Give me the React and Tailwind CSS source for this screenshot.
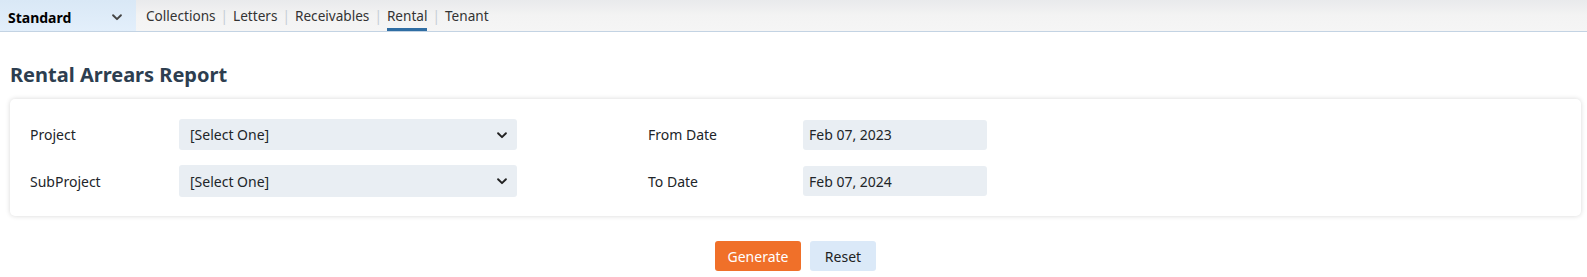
import React from "react";

const Chevron = ({ className = "" }) => (
  <svg viewBox="0 0 16 16" className={className} fill="none" stroke="currentColor" strokeWidth="2.2" strokeLinecap="round" strokeLinejoin="round">
    <path d="M3.5 6 L8 10.5 L12.5 6" />
  </svg>
);

export default function App() {
  const tabs = ["Collections", "Letters", "Receivables", "Rental", "Tenant"];
  return (
    <div className="w-[1587px] h-[277px] bg-white text-[14px] text-[#212529]" style={{ fontFamily: '"Noto Sans", "Open Sans", sans-serif' }}>
      <div className="h-[32px] flex items-stretch bg-gradient-to-b from-[#e9eaec] via-[#f3f3f3] to-[#f5f5f5] border-b border-[#c3d3e3]">
        <div className="w-[136px] flex items-center justify-between pl-[8px] pr-[12px] pt-[3px] bg-gradient-to-b from-[#d9e8f6] to-[#e3effb]">
          <span className="font-bold text-[14px] text-black">Standard</span>
          <Chevron className="w-[14px] h-[14px] text-[#444]" />
        </div>
        <div className="flex items-stretch pl-[10px]">
          {tabs.map((t, i) => (
            <div key={t} className="flex items-stretch">
              {i > 0 && <span className="self-center text-[#c5cdd6] px-[5px] pt-[2px] text-[13.6px]">|</span>}
              <span className={"flex items-center pt-[4px] text-[13.6px] text-[#333] border-b-[3px] " + (t === "Rental" ? "border-[#2f6da3]" : "border-transparent")}>
                {t}
              </span>
            </div>
          ))}
        </div>
      </div>

      <div className="px-[10px]">
        <h1 className="mt-[30px] text-[20px] font-bold text-[#2d3e50] leading-[26px]">Rental Arrears Report</h1>
        <div className="mt-[11px] w-[1571px] h-[117px] rounded-[5px] bg-white shadow-[0_0_5px_rgba(0,0,0,0.16)] pl-[20px] pt-[20px]">
          <div className="grid grid-cols-[149px_338px_131px_155px_184px] gap-y-[15px] items-center">
            <span>Project</span>
            <div className="h-[31px] rounded-[3px] bg-[#e9eef3] flex items-center justify-between pl-[11px] pr-[8px]">
              <span>[Select One]</span>
              <Chevron className="w-[14px] h-[14px] text-[#222]" />
            </div>
            <span />
            <span>From Date</span>
            <div className="h-[30px] rounded-[3px] bg-[#e9eef3] flex items-center pl-[6px]">Feb 07, 2023</div>

            <span>SubProject</span>
            <div className="h-[32px] rounded-[3px] bg-[#e9eef3] flex items-center justify-between pl-[11px] pr-[8px]">
              <span>[Select One]</span>
              <Chevron className="w-[14px] h-[14px] text-[#222]" />
            </div>
            <span />
            <span>To Date</span>
            <div className="h-[30px] rounded-[3px] bg-[#e9eef3] flex items-center pl-[6px]">Feb 07, 2024</div>
          </div>
        </div>
        <div className="mt-[25px] flex justify-center gap-[9px] pl-[4px]">
          <button className="w-[86px] h-[30px] rounded-[3px] bg-[#f07029] text-white text-[14px]">Generate</button>
          <button className="w-[66px] h-[30px] rounded-[3px] bg-[#dbe9f8] text-[#222] text-[14px]">Reset</button>
        </div>
      </div>
    </div>
  );
}
